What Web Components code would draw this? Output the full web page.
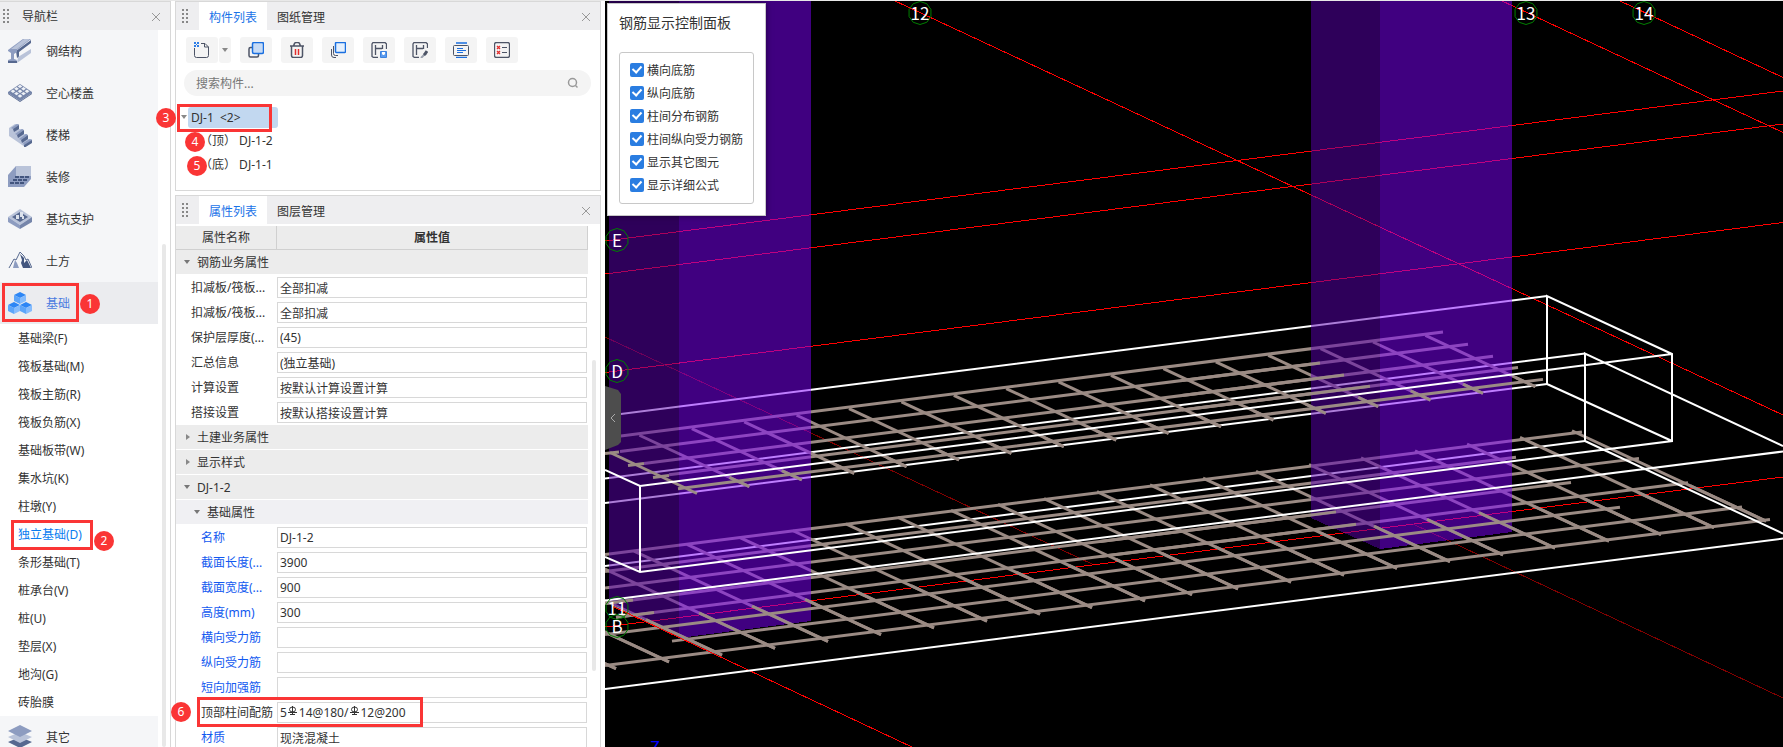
<!DOCTYPE html>
<html lang="zh-CN">
<head>
<meta charset="utf-8">
<title>钢筋显示</title>
<style>
  html, body {
    margin: 0;
    height: 100%;
  }
  body {
    font: 12px/20px "Noto Sans", "Noto Sans CJK SC", sans-serif;
    color: #333;
    background: #fff;
    overflow: hidden;
  }
</style>
</head>
<body>
<bim-app></bim-app>

<script>
const define = (name, html, setup) => {
  const template = document.createElement('template');
  template.innerHTML = html;

  customElements.define(name, class extends HTMLElement {
    constructor() {
      super();
      this._shadowRoot = this.attachShadow({ mode: 'open' });
      this._shadowRoot.appendChild(template.content.cloneNode(true));
    }

    connectedCallback() {
      if (setup) setup.call(this, this._shadowRoot);
    }
  });
};

// ---------- icons ----------

let holes = '';
for (let i = 0; i < 3; i++) {
  for (let j = 0; j < 3; j++) {
    holes += `M${12 + (i - j) * 3.5} ${8.5 + (i + j - 2) * 2.4}l2.400 1.700-2.400 1.700-2.400-1.700z`;
  }
}

const cube = '<path fill="#2d86f5" d="m12 1 6 3-6 3-6-3z"/><path fill="#5ca5fa" d="m6 4 6 3v6l-6-3z"/><path fill="#85bcfd" d="m18 4-6 3v6l6-3z"/>';

const icons = {
  beam: '<path fill="#8d9cc0" d="M0 11 15 0h8L9 11z"/><path fill="#b9c3d9" d="M3 10 16 0h6L9 10z"/><path fill="#56688f" d="m8 12 15-11v3L11 13v5l-2 1z"/><path fill="#b9c3d9" d="m10 18 13-8v4L9 24z"/><path fill="#8d9cc0" d="M0 11h9v2l-3 2v5l3 1-2 3H0v-3l3-1v-6l-3-2z"/><path fill="#56688f" d="M0 22h9v2H0z"/>',
  lattice: `<path fill="#56688f" d="m0 12 12 8 12-8v1l-12 8L0 13z"/><path fill="#7585aa" d="M0 11 12 3l12 8v1l-12 8L0 12z"/><path fill="#eef1f6" d="${holes}"/>`,
  stairs: '<path fill="#b9c3d9" d="M1 5 7 1h4v5h4v5h4v5h5v3l-7 5L1 13z"/><path fill="#8d9cc0" d="M3 5 9 1l2 1-6 4zM7 11l7-5 2 1-7 5zM11 16l7-5 2 1-7 5zM15 20l7-4 2 2-8 4z"/><g fill="#56688f"><path d="m5 6 6-4v4L6 9zM9 12l7-5v4l-6 4zM13 17l7-5v4l-6 4zM16 22l8-5v3l-8 5z"/></g>',
  room: '<path fill="#b9c3d9" d="M8 1h15v11l-6 8H5z"/><path fill="#8d9cc0" d="m0 10 8-9v11l-8 9z"/><path fill="#8d9cc0" d="M8 11h15v3l-7 8H0v-2z"/><g stroke="#42557e" stroke-width="2" stroke-dasharray="4 1"><path d="M7 12h15M5 15h14M2 18h15"/></g>',
  pit: '<path fill="#b9c3d9" d="M0 10 12 2l12 8-12 8z"/><path fill="#8d9cc0" d="m0 10 12 8v4L0 15z"/><path fill="#7585aa" d="m24 10-12 8v4l12-7z"/><path fill="#56688f" d="m4 10 8-5 8 5-8 5z"/><g fill="#dce2ec"><path d="M8 8h3v4H8zM12 5h3v5h-3zM14 9h2v3h-2z"/></g>',
  mountain: '<path fill="none" stroke="#56688f" d="m1 19 5-9 2 1 4-8 4 4 2 4 2-1 4 9"/><path fill="#8d9cc0" d="m5 19 2-8 2 3 2 5z"/><path fill="#42557e" d="m12 5 4 4v5l3-3 4 8h-8l-2-5 1-3z"/>',
  cubes: `${cube}<g transform="translate(-6 10)">${cube}</g><g transform="translate(6 10)">${cube}</g>`,
  layers: '<path fill="#56688f" d="m0 17 12-5 12 5-12 6z"/><path fill="#b9c3d9" d="m0 12 12-5 12 5-12 6z"/><path fill="#8d9cc0" d="M0 6 12 0l12 6-12 6z"/>',

  add: '<path d="M.5 6v7.500q0 2 2 2h10q2 0 2-2V5L11 1.500H7M10.500 1.500V5h4"/><g stroke="none" fill="#2f7ee6"><path d="M0 0h2v2H0zM3 0h2v2H3zM2 2h1v1H2zM0 3h2v2H0zM3 3h2v2H3z"/></g>',
  copy: '<path stroke-width="1.500" d="M4 5.500H2.500q-1.500 0-1.500 1.500v6.500q0 1.500 1.500 1.500H9q1.500 0 1.500-1.500V11"/><rect x="4.500" y=".5" width="11" height="11" rx="1.500" fill="#c7dbf5" stroke="#1a6fe0" stroke-width="1.500"/>',
  trash: '<path stroke-width="1.500" d="M1 4h14M4.500 4l1-2.500 1-1h3l1 1 1 2.500M2.500 4v9.500q0 2 2 2h7q2 0 2-2V4"/><path stroke="#e22d2d" stroke-width="1.500" d="M6.500 7v6M9.500 7v6"/>',
  stack: '<rect x="5.500" y=".5" width="10" height="10" rx="1" fill="#e5f0fd" stroke="#1a6fe0" stroke-width="1.500"/><path d="M3.500 4v7.500q0 2 2 2H8M1.500 7v6q0 2.500 2.500 2.500h2"/>',
  save: '<path stroke-width="1.300" d="M7 15.500H2.500l-1.500-1V2L2 .5h12l1.500 1.500v5M4.500 13V3M11.500 7V3M5 6.500h6"/><path fill="#5b9bee" stroke="#3d83e0" d="M9.500 9.500h6v6h-6z"/><path fill="#fff" stroke="none" d="M11 10h3v2l-1 1h-1l-1-1z"/>',
  pick: '<path stroke-width="1.300" d="M7 15.500H2.500l-1.500-1V2L2 .5h12l1.500 1.500v4M4.500 13V3M11.500 7V3M5 6.500h6"/><path stroke="#9aa0ad" stroke-width="2" d="m9 16 4-4"/><path stroke-width="3" d="m12 11 2 2M13 12l2-3"/>',
  align: '<rect x=".5" y="3.500" width="15" height="10" rx="1"/><path stroke="#1a6fe0" stroke-width="1.500" d="M3 1h11M3 15.500h11"/><path stroke="#1a6fe0" d="M4 6.500h6M4 8.500h9M4 10.500h6"/>',
  check: '<rect x=".5" y=".5" width="15" height="15" rx="2" stroke-width="1.300"/><path stroke="#e22d2d" stroke-width="1.300" d="m3 4 3 3M6 4 3 7M3 9l3 3M6 9l-3 3"/><path d="M8 5.500h5M8 10.500h5"/>'
};

// ---------- shared parts ----------

define('grip-dots', `
  <style>
    :host { display: block; width: 6px; height: 14px; flex: none;
      background: radial-gradient(circle at 1px 1px, #888 1px, transparent 1px) 0 0 / 4px 4px; }
  </style>
`);

define('close-button', `
  <style>
    :host { display: block; margin-left: auto; flex: none; padding-top: 1px; }
    button { display: block; border: 0; background: none; padding: 0; width: 10px; height: 10px; }
    svg { display: block; }
  </style>
  <button aria-label="关闭"><svg width="10" height="10"><path d="m1 1 8 8M9 1 1 9" stroke="#999" fill="none"/></svg></button>
`);

define('tab-bar', `
  <style>
    :host { display: flex; align-items: center; height: 28px; background: #eeeef0; padding: 0 9px 0 6px; flex: none; }
    .tabs { display: flex; margin-left: 11px; }
    button { border: 0; background: none; font: inherit; color: #333; line-height: 28px; height: 28px; padding: 2px 10px 0; }
    .on { background: #fff; color: #1a73e8; }
  </style>
  <grip-dots></grip-dots>
  <div class="tabs"><button class="on"></button><button></button></div>
  <close-button></close-button>
`, function (root) {
  const names = this.getAttribute('tabs').split(',');
  root.querySelectorAll('.tabs button').forEach((b, i) => b.textContent = names[i]);
});

// ---------- navigation ----------

define('nav-group', `
  <style>
    :host { display: block; flex: none; margin-right: 12px; }
    button { display: flex; align-items: center; gap: 14px; width: 100%; height: 42px; padding: 0 8px;
      border: 0; background: #f5f6f8; font: inherit; color: #333; }
    :host([selected]) button { background: #ebecef; color: #4a7be0; }
    svg { width: 24px; height: 24px; }
    span { padding-top: 2px; }
  </style>
  <button><svg viewBox="0 0 24 24"></svg><span><slot></slot></span></button>
`, function (root) {
  root.querySelector('svg').innerHTML = icons[this.getAttribute('icon')];
});

define('nav-link', `
  <style>
    :host { display: block; flex: none; }
    a { display: block; line-height: 30px; height: 28px; padding-left: 18px; color: #333; text-decoration: none; }
    :host([selected]) a { color: #0a7cf0; }
  </style>
  <a href="#"><slot></slot></a>
`);

define('nav-panel', `
  <style>
    :host { display: flex; flex-direction: column; width: 170px; flex: none; position: relative; overflow: hidden;
      border-top: 1px solid #d8d8d8; border-right: 1px solid #d8d8d8; }
    header { display: flex; align-items: center; gap: 13px; height: 28px; flex: none; padding: 0 9px 0 3px; background: #eeeef0; }
    header span { padding-top: 2px; }
    i { position: absolute; right: 4px; top: 242px; bottom: 0; width: 4px; border-radius: 2px; background: #e8e8e8; }
  </style>
  <header><grip-dots></grip-dots><span>导航栏</span><close-button></close-button></header>
  <nav-group icon="beam">钢结构</nav-group>
  <nav-group icon="lattice">空心楼盖</nav-group>
  <nav-group icon="stairs">楼梯</nav-group>
  <nav-group icon="room">装修</nav-group>
  <nav-group icon="pit">基坑支护</nav-group>
  <nav-group icon="mountain">土方</nav-group>
  <nav-group icon="cubes" selected>基础</nav-group>
  <nav-link>基础梁(F)</nav-link>
  <nav-link>筏板基础(M)</nav-link>
  <nav-link>筏板主筋(R)</nav-link>
  <nav-link>筏板负筋(X)</nav-link>
  <nav-link>基础板带(W)</nav-link>
  <nav-link>集水坑(K)</nav-link>
  <nav-link>柱墩(Y)</nav-link>
  <nav-link selected>独立基础(D)</nav-link>
  <nav-link>条形基础(T)</nav-link>
  <nav-link>桩承台(V)</nav-link>
  <nav-link>桩(U)</nav-link>
  <nav-link>垫层(X)</nav-link>
  <nav-link>地沟(G)</nav-link>
  <nav-link>砖胎膜</nav-link>
  <nav-group icon="layers">其它</nav-group>
  <i></i>
`);

// ---------- component list ----------

define('tool-button', `
  <style>
    :host { display: block; }
    button { display: grid; place-items: center; width: 32px; height: 26px; border: 0; padding: 0; border-radius: 3px; background: #f4f4f4; }
    svg { fill: none; stroke: #4d5466; }
  </style>
  <button><svg width="16" height="16" viewBox="0 0 16 16"></svg></button>
`, function (root) {
  root.querySelector('button').setAttribute('aria-label', this.getAttribute('label'));
  root.querySelector('svg').innerHTML = icons[this.getAttribute('icon')];
});

define('component-list', `
  <style>
    :host { display: flex; flex-direction: column; height: 188px; flex: none; border: 1px solid #d8d8d8; box-sizing: content-box; }
    .tools { display: flex; gap: 9px; padding: 7px 10px; }
    .split { display: flex; gap: 1px; }
    .drop { width: 12px; height: 26px; border: 0; border-radius: 3px; background: #f4f4f4; padding: 0 3px; }
    .drop::before { content: ""; display: block; border: 3px solid transparent; border-top: 4px solid #888; border-bottom: 0; }
    .search { display: flex; align-items: center; height: 26px; margin: 0 9px 0 8px; padding: 0 12px; border-radius: 13px; background: #f4f4f4; }
    input { flex: 1; border: 0; padding: 2px 0 0; background: none; font: inherit; outline: 0; }
    input::placeholder { color: #777; }
    .tree { list-style: none; margin: 9px 0 0; padding: 0; line-height: 24px; }
    .tree > li > span { display: flex; align-items: center; height: 24px; padding-left: 5px; gap: 1px; }
    .tree > li > span::before { content: ""; border: 3px solid transparent; border-top: 4px solid #888; border-bottom: 0; }
    b { font-weight: normal; line-height: 21px; width: 87px; padding-left: 3px; border-radius: 3px; background: #c2d8f0; white-space: pre; }
    ul ul { list-style: none; padding-left: 24px; }
  </style>
  <tab-bar tabs="构件列表,图纸管理"></tab-bar>
  <div class="tools">
    <div class="split"><tool-button icon="add" label="新建"></tool-button><button class="drop" aria-label="更多"></button></div>
    <tool-button icon="copy" label="复制"></tool-button>
    <tool-button icon="trash" label="删除"></tool-button>
    <tool-button icon="stack" label="层间复制"></tool-button>
    <tool-button icon="save" label="存档"></tool-button>
    <tool-button icon="pick" label="提取"></tool-button>
    <tool-button icon="align" label="排列"></tool-button>
    <tool-button icon="check" label="检查"></tool-button>
  </div>
  <div class="search">
    <input type="text" placeholder="搜索构件..." aria-label="搜索构件">
    <svg width="12" height="12"><g fill="none" stroke="#999" stroke-width="1.500"><circle cx="5.500" cy="5.500" r="4"/><path d="m8.500 8.500 2 2"/></g></svg>
  </div>
  <ul class="tree">
    <li><span><b>DJ-1  &lt;2&gt;</b></span>
      <ul><li>（顶） DJ-1-2</li><li>（底） DJ-1-1</li></ul>
    </li>
  </ul>
`);

// ---------- property list ----------

const properties = [
  { group: '钢筋业务属性', open: true },
  { name: '扣减板/筏板...', value: '全部扣减' },
  { name: '扣减板/筏板...', value: '全部扣减' },
  { name: '保护层厚度(...', value: '(45)' },
  { name: '汇总信息', value: '(独立基础)' },
  { name: '计算设置', value: '按默认计算设置计算' },
  { name: '搭接设置', value: '按默认搭接设置计算' },
  { group: '土建业务属性' },
  { group: '显示样式' },
  { group: 'DJ-1-2', open: true },
  { group: '基础属性', open: true, sub: true },
  { name: '名称', value: 'DJ-1-2', kind: 'sub own' },
  { name: '截面长度(...', value: '3900', kind: 'sub own' },
  { name: '截面宽度(...', value: '900', kind: 'sub own' },
  { name: '高度(mm)', value: '300', kind: 'sub own' },
  { name: '横向受力筋', value: '', kind: 'sub own' },
  { name: '纵向受力筋', value: '', kind: 'sub own' },
  { name: '短向加强筋', value: '', kind: 'sub own' },
  // em spaces leave room for the rebar grade signs
  { name: '顶部柱间配筋', value: '5\u200314@180/\u200312@200', kind: 'sub', signs: [11, 73] },
  { name: '材质', value: '现浇混凝土', kind: 'sub own' }
];

define('property-list', `
  <style>
    :host { display: flex; flex-direction: column; flex: 1; min-height: 0; overflow: hidden; position: relative; border: 1px solid #d8d8d8; border-bottom: 0; }
    table { border-collapse: separate; border-spacing: 0; table-layout: fixed; width: calc(100% - 12px); margin-top: 2px; }
    th, td { padding: 0; box-sizing: border-box; }
    thead th { height: 24px; background: #ececec; border-right: 1px solid #d0d0d0; border-bottom: 1px solid #d0d0d0; font-weight: normal; line-height: 23px; }
    thead th:first-child { width: 101px; }
    thead th + th { font-weight: bold; }
    .group th { height: 25px; text-align: left; font-weight: normal; background: #ececec; border-bottom: 1px solid #fff; padding: 1px 0 0 8px; line-height: 23px; }
    .group.sub th { background: #f0f0f3; padding-left: 18px; }
    .group th::before { content: ""; display: inline-block; width: 0; margin-right: 7px; vertical-align: 2px; border: 3px solid transparent; border-left: 4px solid #888; border-right: 0; margin-left: 2px; }
    .group.open th::before { border: 3px solid transparent; border-top: 4px solid #777; border-bottom: 0; margin-left: 0; vertical-align: 3px; }
    .row td, .row th { height: 25px; position: relative; }
    .row th { text-align: left; font-weight: normal; padding-left: 15px; white-space: nowrap; }
    .row.sub th { padding-left: 25px; }
    .own th { color: #1259f0; }
    .row td { padding: 2px 1px 2px 0; }
    input { display: block; box-sizing: border-box; width: 100%; height: 21px; border: 1px solid #d8d8d8; padding: 0 2px; font: inherit; color: #333; outline: 0; background: #fff; }
    svg { position: absolute; top: 6px; fill: none; stroke: #333; }
    i { position: absolute; right: 4px; top: 164px; width: 4px; height: 311px; border-radius: 2px; background: #e8e8e8; }
  </style>
  <tab-bar tabs="属性列表,图层管理"></tab-bar>
  <table>
    <thead><tr><th>属性名称</th><th>属性值</th></tr></thead>
    <tbody></tbody>
  </table>
  <i></i>
`, function (root) {
  root.querySelector('tbody').innerHTML = properties.map((p, i) => {
    if (p.group) {
      return `<tr class="group ${p.open ? 'open' : ''} ${p.sub ? 'sub' : ''}"><th colspan="2">${p.group}</th></tr>`;
    }
    const signs = (p.signs || []).map(x =>
      `<svg style="left:${x}px" width="9" height="10"><path d="M4.500 0v9M0 6.500h9M2 8.500h5"/><ellipse cx="4.500" cy="3.500" rx="3" ry="2.500"/></svg>`).join('');
    return `<tr class="row ${p.kind || ''}"><th><label for="p${i}">${p.name}</label></th>` +
      `<td><input type="text" id="p${i}" value="${p.value}">${signs}</td></tr>`;
  }).join('');
});

// ---------- 3D view ----------

const line = (x1, y1, x2, y2) => `M${x1} ${y1}L${x2} ${y2}`;

const sceneMarkup = () => {
  // a bar that follows the long side: y is given at x = 1000
  const long = (y, x1, x2, k) => line(x1, y - (x1 - 1000) * k, x2, y - (x2 - 1000) * k);

  let topCross = '', topTails = '';
  for (let i = 1; i < 17; i++) {
    const x = 697 + 52.4 * i, y = 493.3 - 6.66 * i;
    topCross += line(x - 110, y - 51.4, x, y);
    topTails += line(x - 20, y - 9.3, x, y);
  }

  let cross = '', tails = '';
  [561, 614, 667, 720, 773, 826, 879, 932, 985, 1038, 1090, 1143, 1190, 1236, 1289, 1342, 1395, 1448, 1501, 1553, 1607, 1659, 1712, 1764].forEach(x => {
    const y = 667.7 - (x - 614) * 0.1284;
    cross += line(x - 192, y - 89.3, x + 2, y + 1);
    tails += line(x - 74, y - 34.4, x + 2, y + 1);
  });

  const bubble = (x, y, text) => {
    let pts = '';
    for (let a = 0; a < 10; a++) {
      pts += `${x + 11.5 * Math.sin(a * Math.PI / 5)},${y + 11.5 * Math.cos(a * Math.PI / 5)} `;
    }
    return `<polygon class="bubble" points="${pts}"/><text x="${x}" y="${y + 7}">${text}</text>`;
  };

  return `
    <g class="axis">
      <path d="${line(605, 241, 1783, 91)}${line(605, 274, 1783, 124)}${line(605, 372.5, 1783, 222.5)}${line(605, 627, 1783, 477)}"/>
      <path d="${line(893, 0, 1783, 415)}${line(1500, 0, 1783, 132.5)}${line(1618, 0, 1783, 77.5)}"/>
      <path class="far" d="${line(605, 337, 1092, 564)}${line(1413, 524, 1783, 698)}"/>
    </g>
    <path class="edge" d="${line(605, 416, 1547, 296)}${line(605, 503, 1547, 384)}${line(605, 478.5, 1585, 353.5)}${line(605, 566, 1585, 441)}"/>
    <path class="bar" d="${long(388, 605, 1443, 0.1264)}${long(403.5, 620, 1468, 0.1264)}${long(418.5, 644, 1493, 0.1264)}${long(433, 669, 1518, 0.1264)}"/>
    <path class="bar thin" d="${topCross}"/>
    <path class="bar" d="${long(505, 605, 1582, 0.1254)}${long(522, 605, 1516, 0.1254)}${long(538.5, 605, 1639, 0.1254)}${long(554, 605, 1571, 0.1254)}${long(569, 616, 1688, 0.1254)}"/>
    <path class="bar" d="${cross}"/>

    <g opacity=".5" shape-rendering="crispEdges">
      <path fill="#5c00b3" d="M609 0h70v636L609 603zM1311 0h69v549l-69-31z"/>
      <path fill="#8000ff" d="M679 0h132v621L679 638zM1380 0h132v532l-132 17z"/>
    </g>

    <path class="bar" d="${long(403.5, 1182, 1320, 0.1264)}${long(418.5, 1182, 1344, 0.1264)}${long(433, 1182, 1370, 0.1264)}${long(448, 678, 1543, 0.1264)}"/>
    <path class="bar" d="${line(605, 453.5, 619, 452)}${line(628, 465.5, 644, 463.5)}${line(653, 477.5, 669, 475.5)}"/>
    <path class="bar thin" d="${line(610, 452.5, 697, 493.5)}${topTails}"/>
    <path class="bar" d="${long(554, 605, 633, 0.1254)}${long(554, 1100, 1336, 0.1254)}${long(569, 616, 654, 0.1254)}${long(569, 1100, 1356, 0.1254)}${long(585, 605, 1620, 0.1254)}${long(600, 672, 1742, 0.1254)}${long(616, 605, 1770, 0.1254)}"/>
    <path class="bar" d="${tails}"/>
    <path class="axis" d="${line(612, 606, 912, 747)}"/>
    <path class="edge" d="M605 470l35 16L1672 354M640 486v86M605 557l35 15L1672 441V354L1547 296v88l125 57M1783 446L1585 353.500V441L1783 533.500M605 600.500L1783 451.500M605 689L1783 538.500"/>

    ${bubble(920, 13, '12')}${bubble(1526, 13, '13')}${bubble(1644, 13, '14')}
    ${bubble(617, 240, 'E')}${bubble(617, 371, 'D')}${bubble(617, 608, '11')}${bubble(617, 626, 'B')}
    <text x="655" y="754" fill="#00f">Z</text>
  `;
};

define('rebar-toggle', `
  <style>
    :host { display: block; height: 23px; }
    label { display: flex; align-items: center; gap: 3px; height: 14px; white-space: nowrap; }
    span { padding-top: 2px; }
    input { appearance: none; margin: 0; width: 14px; height: 14px; border-radius: 2px; flex: none; display: grid; place-items: center; }
    input:checked { background: #2a7de1; }
    input:checked::before { content: ""; width: 6px; height: 9px; margin-bottom: 3px; border: solid #fff; border-width: 0 2px 2px 0; transform: rotate(42deg); box-sizing: border-box; }
  </style>
  <label><input type="checkbox" checked><span><slot></slot></span></label>
`);

define('rebar-panel', `
  <style>
    :host { display: block; box-sizing: border-box; padding: 9px 11px 11px; background: #fff; border: 1px solid #c8c8c8; box-shadow: 0 0 6px rgba(0, 0, 0, .5); }
    h2 { margin: 0 0 19px; font-size: 14px; line-height: 20px; font-weight: normal; }
    section { border: 1px solid #c8c8c8; border-radius: 3px; padding: 10px 10px 2px; }
  </style>
  <h2>钢筋显示控制面板</h2>
  <section>
    <rebar-toggle>横向底筋</rebar-toggle>
    <rebar-toggle>纵向底筋</rebar-toggle>
    <rebar-toggle>柱间分布钢筋</rebar-toggle>
    <rebar-toggle>柱间纵向受力钢筋</rebar-toggle>
    <rebar-toggle>显示其它图元</rebar-toggle>
    <rebar-toggle>显示详细公式</rebar-toggle>
  </section>
`);

define('model-view', `
  <style>
    :host { display: block; flex: 1; min-width: 0; position: relative; overflow: hidden; background: #000; }
    .scene { display: block; width: 100%; height: 100%; }
    .axis { fill: none; stroke: #f00; stroke-width: 1; shape-rendering: crispEdges; }
    .far { stroke: #800000; }
    .edge { fill: none; stroke: #fff; stroke-width: 2; }
    .bar { fill: none; stroke: #9b8b84; stroke-width: 3; }
    .bubble { fill: none; stroke: #008000; }
    text { font: 17px "Noto Sans CJK SC", sans-serif; fill: #fff; text-anchor: middle; }
    text[fill] { fill: #00f; }
    rebar-panel { position: absolute; left: 2px; top: 2px; width: 159px; }
    .fold { position: absolute; left: 0; top: 385px; width: 16px; height: 64px; border: 0; padding: 0; background: #4d4d4d; clip-path: polygon(0 0, 13px 4px, 100% 8px, 100% 56px, 13px 59px, 0 100%); }
  </style>
  <svg class="scene" viewBox="605 1 1178 746" preserveAspectRatio="xMinYMin slice"></svg>
  <rebar-panel></rebar-panel>
  <button class="fold" aria-label="收起"><svg width="6" height="10"><path d="M5 1 1 5l4 4" fill="none" stroke="#aaa"/></svg></button>
`, function (root) {
  root.querySelector('.scene').innerHTML = sceneMarkup();
});

// ---------- numbered callouts ----------

define('step-mark', `
  <style>
    :host { position: absolute; pointer-events: none; }
    :host([box]) { border: 3px solid #fa3535; box-sizing: border-box; }
    :host(:not([box])) { width: 20px; height: 20px; border-radius: 10px; background: #fa3535; color: #fff; text-align: center; line-height: 20px; }
  </style>
  <slot></slot>
`, function () {
  const [x, y, w, h] = this.getAttribute('at').split(' ');
  this.style.left = x + 'px';
  this.style.top = y + 'px';
  if (w) {
    this.style.width = w + 'px';
    this.style.height = h + 'px';
  }
});

define('bim-app', `
  <style>
    :host { display: flex; height: 100vh; box-sizing: border-box; border-top: 1px solid #e8e8e8; position: relative; overflow: hidden; }
    main { display: flex; flex-direction: column; gap: 4px; width: 426px; flex: none; margin: 0 4px; }
  </style>
  <nav-panel></nav-panel>
  <main>
    <component-list></component-list>
    <property-list></property-list>
  </main>
  <model-view></model-view>

  <step-mark box at="2 282 77 39"></step-mark><step-mark at="80 293">1</step-mark>
  <step-mark box at="11 519 82 30"></step-mark><step-mark at="94 530">2</step-mark>
  <step-mark box at="177 103 95 28"></step-mark><step-mark at="156 107">3</step-mark>
  <step-mark at="185 131">4</step-mark>
  <step-mark at="187 155">5</step-mark>
  <step-mark box at="197 696 226 30"></step-mark><step-mark at="171 701">6</step-mark>
`);
</script>
</body>
</html>
